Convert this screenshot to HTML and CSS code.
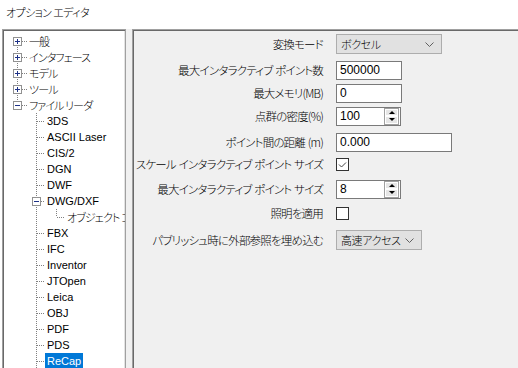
FILE: index.html
```html
<!DOCTYPE html>
<html lang="ja">
<head>
    <meta charset="UTF-8">
    <title>オプション エディタ</title>
    <link rel="stylesheet" href="styles.css">
</head>
<body>
    <div class="title">オプション エディタ</div>

    <div class="main">
        <div class="tree">
            <div class="top-group">
                <div class="node top">
                    <svg class="exp" width="9" height="9" viewBox="0 0 9 9"><rect x="0.5" y="0.5" width="8" height="8" fill="#fff" stroke="#919191"/><path d="M2 4.5h5M4.5 2v5" stroke="#1e3287"/></svg>
                    <span class="dash"></span><span class="label">一般</span>
                </div>
                <div class="node top">
                    <svg class="exp" width="9" height="9" viewBox="0 0 9 9"><rect x="0.5" y="0.5" width="8" height="8" fill="#fff" stroke="#919191"/><path d="M2 4.5h5M4.5 2v5" stroke="#1e3287"/></svg>
                    <span class="dash"></span><span class="label">インタフェース</span>
                </div>
                <div class="node top">
                    <svg class="exp" width="9" height="9" viewBox="0 0 9 9"><rect x="0.5" y="0.5" width="8" height="8" fill="#fff" stroke="#919191"/><path d="M2 4.5h5M4.5 2v5" stroke="#1e3287"/></svg>
                    <span class="dash"></span><span class="label">モデル</span>
                </div>
                <div class="node top">
                    <svg class="exp" width="9" height="9" viewBox="0 0 9 9"><rect x="0.5" y="0.5" width="8" height="8" fill="#fff" stroke="#919191"/><path d="M2 4.5h5M4.5 2v5" stroke="#1e3287"/></svg>
                    <span class="dash"></span><span class="label">ツール</span>
                </div>
                <div class="node top">
                    <svg class="exp" width="9" height="9" viewBox="0 0 9 9"><rect x="0.5" y="0.5" width="8" height="8" fill="#fff" stroke="#919191"/><path d="M2 4.5h5" stroke="#1e3287"/></svg>
                    <span class="dash"></span><span class="label">ファイル リーダ</span>
                </div>
            </div>

            <div class="child-group">
                <div class="node child"><span class="dash long"></span><span class="label">3DS</span></div>
                <div class="node child"><span class="dash long"></span><span class="label">ASCII Laser</span></div>
                <div class="node child"><span class="dash long"></span><span class="label">CIS/2</span></div>
                <div class="node child"><span class="dash long"></span><span class="label">DGN</span></div>
                <div class="node child"><span class="dash long"></span><span class="label">DWF</span></div>
                <div class="node child-box">
                    <svg class="exp" width="9" height="9" viewBox="0 0 9 9"><rect x="0.5" y="0.5" width="8" height="8" fill="#fff" stroke="#919191"/><path d="M2 4.5h5" stroke="#1e3287"/></svg>
                    <span class="dash"></span><span class="label">DWG/DXF</span>
                </div>
                <div class="grand-group">
                    <div class="node grand"><span class="dash long"></span><span class="label">オブジェクト コンバータ</span></div>
                </div>
                <div class="node child"><span class="dash long"></span><span class="label">FBX</span></div>
                <div class="node child"><span class="dash long"></span><span class="label">IFC</span></div>
                <div class="node child"><span class="dash long"></span><span class="label">Inventor</span></div>
                <div class="node child"><span class="dash long"></span><span class="label">JTOpen</span></div>
                <div class="node child"><span class="dash long"></span><span class="label">Leica</span></div>
                <div class="node child"><span class="dash long"></span><span class="label">OBJ</span></div>
                <div class="node child"><span class="dash long"></span><span class="label">PDF</span></div>
                <div class="node child"><span class="dash long"></span><span class="label">PDS</span></div>
                <div class="node child"><span class="dash long"></span><span class="label selected">ReCap</span></div>
                <div class="node child"><span class="dash long"></span><span class="label">Revit</span></div>
            </div>
        </div>

        <div class="splitter"></div>

        <div class="panel">
            <div class="row h26">
                <div class="name">変換モード</div>
                <div class="select wide">
                    <span>ボクセル</span>
                    <svg width="9" height="5" viewBox="0 0 9 5"><path d="M0.5 0.5l4 4 4-4" fill="none" stroke="#606060"/></svg>
                </div>
            </div>
            <div class="row h26">
                <div class="name">最大インタラクティブ ポイント数</div>
                <div class="input">500000</div>
            </div>
            <div class="row h20">
                <div class="name">最大メモリ(MB)</div>
                <div class="input">0</div>
            </div>
            <div class="row h26">
                <div class="name">点群の密度(%)</div>
                <div class="spin">
                    <span>100</span>
                    <div class="spin-btns">
                        <div class="spin-btn"><span class="arrow up"></span></div>
                        <div class="spin-btn"><span class="arrow down"></span></div>
                    </div>
                </div>
            </div>
            <div class="row h26">
                <div class="name">ポイント間の距離 (m)</div>
                <div class="input long">0.000</div>
            </div>
            <div class="row h18">
                <div class="name">スケール インタラクティブ ポイント サイズ</div>
                <div class="check">
                    <svg width="11" height="11" viewBox="0 0 11 11"><path d="M2 5.5l2.5 2.5 4.5-4.5" fill="none" stroke="#444"/></svg>
                </div>
            </div>
            <div class="row h32">
                <div class="name">最大インタラクティブ ポイント サイズ</div>
                <div class="spin">
                    <span>8</span>
                    <div class="spin-btns">
                        <div class="spin-btn"><span class="arrow up"></span></div>
                        <div class="spin-btn"><span class="arrow down"></span></div>
                    </div>
                </div>
            </div>
            <div class="row h16">
                <div class="name">照明を適用</div>
                <div class="check"></div>
            </div>
            <div class="row h38">
                <div class="name">パブリッシュ時に外部参照を埋め込む</div>
                <div class="select narrow">
                    <span>高速アクセス</span>
                    <svg width="9" height="5" viewBox="0 0 9 5"><path d="M0.5 0.5l4 4 4-4" fill="none" stroke="#606060"/></svg>
                </div>
            </div>
        </div>
    </div>
</body>
</html>
```

FILE: styles.css
```css
* {
    margin: 0;
    padding: 0;
    box-sizing: border-box;
}

body {
    font-family: "Liberation Sans", "Noto Sans CJK JP", sans-serif;
    font-size: 12px;
    background: #fff;
    color: #000;
    height: 368px;
    overflow: hidden;
}

.title {
    height: 29px;
    padding: 4px 0 0 6px;
    font-family: "Noto Sans CJK JP", sans-serif;
    font-feature-settings: "palt";
    font-weight: 300;
    font-size: 11px;
    letter-spacing: -0.6px;
    line-height: 16px;
}

.main {
    display: flex;
    height: 339px;
}

/* ツリー */
.tree {
    width: 124px;
    margin-left: 2px;
    background: #fff;
    border: 1px solid #a0a0a0;
    border-bottom: none;
    box-shadow: inset 1px 1px 0 #696969, inset -1px 0 0 #e3e3e3;
    padding: 3px 0 0 1px;
    overflow: hidden;
    font-size: 11px;
}

.node {
    display: flex;
    align-items: center;
    height: 16px;
    white-space: nowrap;
}

.node .label {
    padding: 0 2px;
    line-height: 16px;
}

.node.top .label,
.node.grand .label {
    font-family: "Noto Sans CJK JP", sans-serif;
    font-feature-settings: "palt";
    font-weight: 300;
    font-size: 11px;
    letter-spacing: -0.9px;
}

.node .label.selected {
    background: #0078d7;
    color: #fff;
}

.exp {
    flex: none;
    display: block;
}

.dash {
    flex: none;
    width: 5px;
    height: 1px;
    background: repeating-linear-gradient(to right, #808080 0 1px, transparent 1px 2px);
}

.dash.long {
    width: 8px;
}

.top-group {
    background: repeating-linear-gradient(to bottom, #808080 0 1px, transparent 1px 2px) 13px 8px / 1px calc(100% - 16px) no-repeat;
}

.node.top {
    padding-left: 9px;
}

.child-group {
    background: repeating-linear-gradient(to bottom, #808080 0 1px, transparent 1px 2px) 32px 0 / 1px 100% no-repeat;
}

.node.child {
    padding-left: 33px;
}

.node.child-box {
    padding-left: 28px;
}

.node.child-box .dash {
    width: 4px;
}

.grand-group {
    background: repeating-linear-gradient(to bottom, #808080 0 1px, transparent 1px 2px) 52px 0 / 1px 8px no-repeat;
}

.node.grand {
    padding-left: 53px;
}

.splitter {
    width: 6px;
    background: #f0f0f0;
}

/* 設定パネル */
.panel {
    flex: 1;
    background: #f0f0f0;
    border-top: 1px solid #a0a0a0;
    border-left: 1px solid #a0a0a0;
    box-shadow: inset 1px 1px 0 #696969;
    padding: 1px 0 0 1px;
    font-family: "Noto Sans CJK JP", sans-serif;
    font-feature-settings: "palt";
    font-weight: 300;
    font-size: 11px;
}

.row {
    display: flex;
    align-items: center;
}

.h16 { height: 16px; }
.h18 { height: 18px; }
.h20 { height: 20px; }
.h26 { height: 26px; }
.h32 { height: 32px; }
.h38 { height: 38px; }

.name {
    width: 189px;
    margin-right: 13px;
    text-align: right;
    white-space: nowrap;
    font-size: 11.5px;
    letter-spacing: -0.8px;
    word-spacing: 1px;
    line-height: 16px;
}

.select {
    display: flex;
    align-items: center;
    justify-content: space-between;
    height: 20px;
    padding: 0 7px 0 4px;
    background: #e1e1e1;
    border: 1px solid #adadad;
    white-space: nowrap;
    letter-spacing: -0.4px;
    line-height: 16px;
}

.select.wide {
    width: 106px;
}

.select.narrow {
    width: 86px;
}

.input {
    width: 66px;
    height: 19px;
    padding: 0 3px;
    background: #fff;
    border: 1px solid #7a7a7a;
    font-family: "Liberation Sans", sans-serif;
    font-weight: 400;
    font-size: 12px;
    line-height: 17px;
}

.input.long {
    width: 116px;
}

.spin {
    display: flex;
    align-items: center;
    justify-content: space-between;
    width: 65px;
    height: 19px;
    padding: 0 1px 0 3px;
    background: #fff;
    border: 1px solid #7a7a7a;
    font-family: "Liberation Sans", sans-serif;
    font-weight: 400;
    font-size: 12px;
    line-height: 17px;
}

.spin-btns {
    display: flex;
    flex-direction: column;
    width: 15px;
    height: 17px;
    border: 1px solid #a0a0a0;
}

.spin-btn {
    flex: 1;
    display: flex;
    align-items: center;
    justify-content: center;
    background: #e6e6e6;
    border: 1px solid #fff;
}

.arrow {
    width: 0;
    height: 0;
    border-left: 3px solid transparent;
    border-right: 3px solid transparent;
}

.arrow.up {
    border-bottom: 3px solid #000;
}

.arrow.down {
    border-top: 3px solid #000;
}

.check {
    display: flex;
    align-items: center;
    justify-content: center;
    width: 13px;
    height: 13px;
    background: #fff;
    border: 1px solid #333;
}
```
